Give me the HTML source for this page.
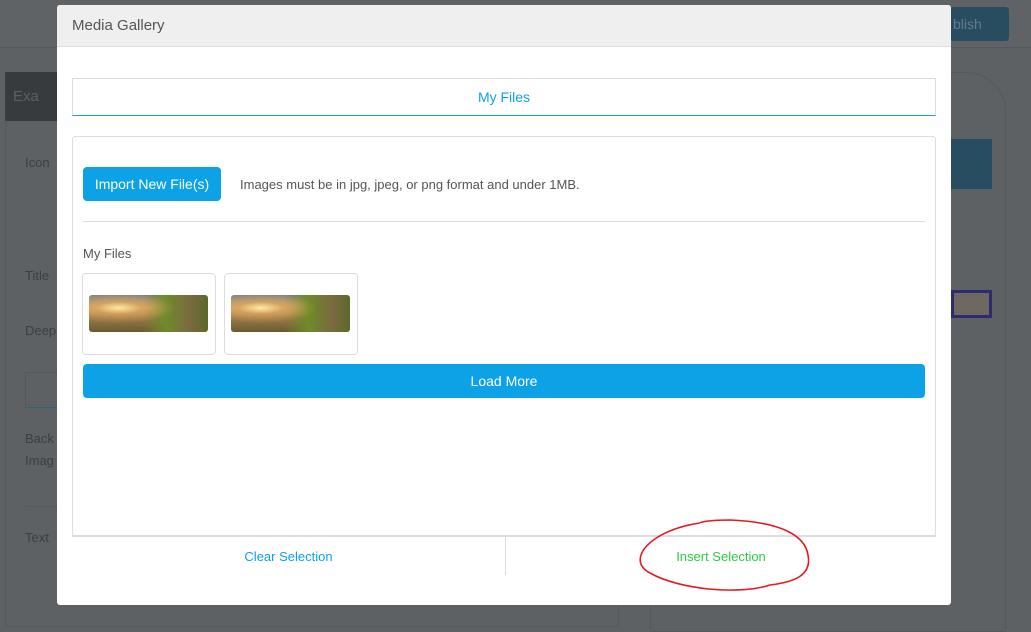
<!DOCTYPE html>
<html><head><style>
*{box-sizing:border-box;margin:0;padding:0}
body{width:1031px;height:627px;overflow:hidden;background:#5e6164;font-family:"Liberation Sans",sans-serif;position:relative}
.a{position:absolute}
</style></head><body>
<div class="a" style="left:0;top:0;width:1031px;height:48px;background:#606366;border-bottom:1px solid #56595c"></div>
<div class="a" style="left:950px;top:7px;width:59px;height:34px;background:#284d61;border-radius:3px;color:#627c8a;font-size:14px;line-height:34px;padding-left:3px">blish</div>
<div class="a" style="left:5px;top:72px;width:60px;height:49px;background:#383b3e;color:#5c5f62;font-size:15px;line-height:49px;padding-left:8px">Exa</div>
<div class="a" style="left:5px;top:121px;width:614px;height:506px;border:1px solid #56595c;border-top:none"></div>
<div class="a" style="left:25px;top:155px;color:#3c3f42;font-size:13px">Icon</div>
<div class="a" style="left:25px;top:268px;color:#3c3f42;font-size:13px">Title</div>
<div class="a" style="left:25px;top:323px;color:#3c3f42;font-size:13px">Deep</div>
<div class="a" style="left:25px;top:372px;width:40px;height:36px;border:1px solid #56595c;border-bottom:1px solid #2a6580"></div>
<div class="a" style="left:25px;top:428px;color:#3c3f42;font-size:13px;line-height:22px">Back<br>Imag</div>
<div class="a" style="left:25px;top:506px;width:40px;border-top:1px solid #56595c"></div>
<div class="a" style="left:25px;top:530px;color:#3c3f42;font-size:13px">Text</div>
<div class="a" style="left:650px;top:72px;width:356px;height:560px;border:1px solid #56595c;border-radius:0 40px 0 0"></div>
<div class="a" style="left:951px;top:139px;width:41px;height:50px;background:#284d61"></div>
<div class="a" style="left:951px;top:290px;width:41px;height:28px;border:3px solid #2c2b6e;background:#6e6860"></div>
<div class="a" style="left:57px;top:5px;width:894px;height:600px;background:#fff;border-radius:3px;overflow:hidden">
 <div class="a" style="left:0;top:0;width:894px;height:42px;background:#eeefee;border-bottom:1px solid #dcdcdc;color:#555;font-size:15px;line-height:42px;padding-left:15px">Media Gallery</div>
 <div class="a" style="left:15px;top:73px;width:864px;height:38px;border:1px solid #ddd;border-bottom:1px solid #0ca2e5;color:#0ca2e5;font-size:14px;line-height:36px;text-align:center">My Files</div>
 <div class="a" style="left:15px;top:131px;width:864px;height:400px;border:1px solid #ddd;border-radius:3px"></div>
 <div class="a" style="left:26px;top:162px;width:138px;height:34px;background:#0ca2e5;border-radius:4px;color:#fff;font-size:14px;line-height:34px;text-align:center">Import New File(s)</div>
 <div class="a" style="left:183px;top:172px;color:#555;font-size:13px">Images must be in jpg, jpeg, or png format and under 1MB.</div>
 <div class="a" style="left:26px;top:216px;width:842px;border-top:1px solid #ddd"></div>
 <div class="a" style="left:26px;top:241px;color:#555;font-size:13px">My Files</div>
 <div class="a" style="left:25px;top:268px;width:134px;height:82px;border:1px solid #ddd;border-radius:4px"></div>
 <div class="a" style="left:167px;top:268px;width:134px;height:82px;border:1px solid #ddd;border-radius:4px"></div>
 <div class="a" style="left:32px;top:290px;width:119px;height:37px;border-radius:3px;background:radial-gradient(ellipse at 25% 35%,#ffe9a0 0%,rgba(230,170,90,.6) 18%,rgba(0,0,0,0) 45%),linear-gradient(90deg,rgba(0,0,0,0) 45%,#6f8a2a 65%,#7a6a40 85%,#5a6a2a 100%),linear-gradient(180deg,#7d8086 0%,#c9a06a 35%,#9a7a4a 60%,#6a5a30 100%)"></div>
 <div class="a" style="left:174px;top:290px;width:119px;height:37px;border-radius:3px;background:radial-gradient(ellipse at 25% 35%,#ffe9a0 0%,rgba(230,170,90,.6) 18%,rgba(0,0,0,0) 45%),linear-gradient(90deg,rgba(0,0,0,0) 45%,#6f8a2a 65%,#7a6a40 85%,#5a6a2a 100%),linear-gradient(180deg,#7d8086 0%,#c9a06a 35%,#9a7a4a 60%,#6a5a30 100%)"></div>
 <div class="a" style="left:26px;top:359px;width:842px;height:34px;background:#0ca2e5;border-radius:4px;color:#fff;font-size:14px;line-height:34px;text-align:center">Load More</div>
 <div class="a" style="left:15px;top:530px;width:864px;border-top:2px solid #ddd"></div>
 <div class="a" style="left:448px;top:532px;height:38px;border-left:1px solid #ddd"></div>
 <div class="a" style="left:15px;top:544px;width:433px;text-align:center;color:#0ca2e5;font-size:13px">Clear Selection</div>
 <div class="a" style="left:449px;top:544px;width:430px;text-align:center;color:#2ecc40;font-size:13px">Insert Selection</div>
</div>
<svg class="a" style="left:0;top:0" width="1031" height="627"><path d="M700 523 C650 530,625 560,650 573 C680 590,740 595,770 585 C795 582,812 575,808 555 C805 535,780 522,730 520 C710 520,700 522,700 523" fill="none" stroke="#e8181e" stroke-width="1.6"/></svg>
</body></html>
